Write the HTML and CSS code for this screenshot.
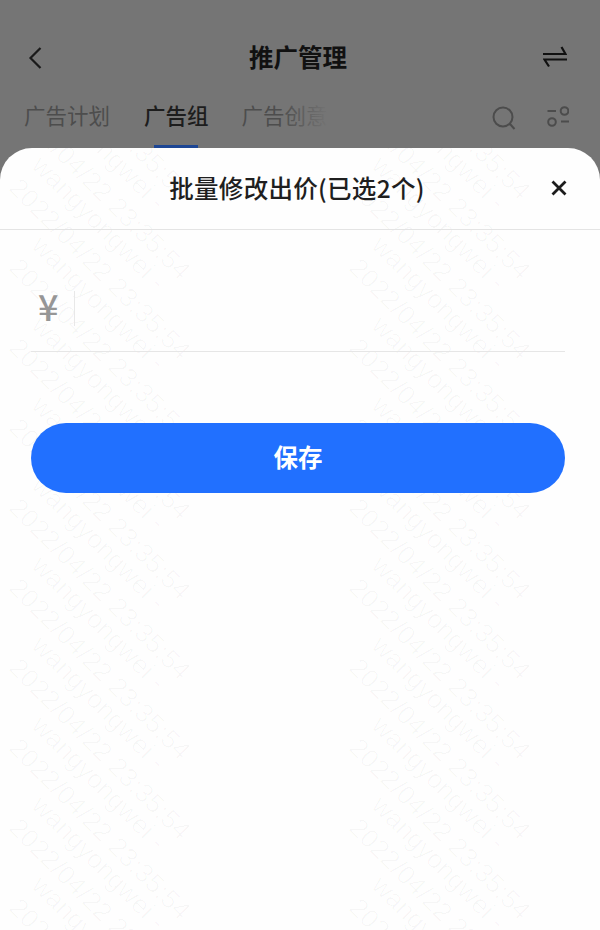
FILE: index.html
```html
<!DOCTYPE html>
<html lang="zh-CN">
<head>
<meta charset="utf-8">
<title>推广管理</title>
<link rel="stylesheet" href="styles.css">
</head>
<body>
<div class="page">
  <header class="nav">
    <svg class="nav-back" width="24" height="30" viewBox="0 0 24 30"><path d="M16.500 5 L6.500 15 L16.500 25" fill="none" stroke="#1a1a1a" stroke-width="2.200"/></svg>
    <h1 class="nav-title">推广管理</h1>
    <svg class="nav-swap" width="24" height="22" viewBox="0 0 24 22"><path d="M0 8H22.500L18.500 1M24 13.500H1.500L6 20.500" fill="none" stroke="#111" stroke-width="2.200"/></svg>
  </header>
  <div class="tabs">
    <span class="tab">广告计划</span>
    <span class="tab tab-active">广告组</span>
    <span class="tab tab-fade">广告创意</span>
    <div class="tab-tools">
      <svg width="24" height="24" viewBox="0 0 24 24"><circle cx="11" cy="11" r="9.500" fill="none" stroke="#4c4c4c" stroke-width="2"/><path d="M18 18L22.500 23" stroke="#4c4c4c" stroke-width="2" fill="none"/></svg>
      <svg width="22" height="22" viewBox="0 0 22 22"><path d="M0.500 5H9M14 15.500H22" stroke="#4c4c4c" stroke-width="2"/><circle cx="17.500" cy="5" r="3.800" fill="none" stroke="#4c4c4c" stroke-width="2"/><circle cx="5" cy="16" r="3.800" fill="none" stroke="#4c4c4c" stroke-width="2"/></svg>
    </div>
  </div>

  <section class="sheet">
    <div class="sheet-head">
      <h2 class="sheet-title">批量修改出价(已选2个)</h2>
      <svg class="sheet-close" width="18" height="18" viewBox="0 0 18 18"><path d="M2.500 2.500L15.500 15.500M15.500 2.500L2.500 15.500" stroke="#1c1c1c" stroke-width="2.800" fill="none"/></svg>
    </div>
    <div class="sheet-body">
      <div class="price-field">
        <span class="price-unit">¥</span>
        <span class="price-caret"></span>
      </div>
      <button class="save-btn" type="button">保存</button>
    </div>
    <div class="watermarks" aria-hidden="true">
      <div class="wm"><span>wangyongwei -</span><span>2022/04/22 23:35:54</span></div>
      <div class="wm"><span>wangyongwei -</span><span>2022/04/22 23:35:54</span></div>
      <div class="wm"><span>wangyongwei -</span><span>2022/04/22 23:35:54</span></div>
      <div class="wm"><span>wangyongwei -</span><span>2022/04/22 23:35:54</span></div>
      <div class="wm"><span>wangyongwei -</span><span>2022/04/22 23:35:54</span></div>
      <div class="wm"><span>wangyongwei -</span><span>2022/04/22 23:35:54</span></div>
      <div class="wm"><span>wangyongwei -</span><span>2022/04/22 23:35:54</span></div>
      <div class="wm"><span>wangyongwei -</span><span>2022/04/22 23:35:54</span></div>
      <div class="wm"><span>wangyongwei -</span><span>2022/04/22 23:35:54</span></div>
      <div class="wm"><span>wangyongwei -</span><span>2022/04/22 23:35:54</span></div>
      <div class="wm"><span>wangyongwei -</span><span>2022/04/22 23:35:54</span></div>
      <div class="wm"><span>wangyongwei -</span><span>2022/04/22 23:35:54</span></div>
      <div class="wm"><span>wangyongwei -</span><span>2022/04/22 23:35:54</span></div>
      <div class="wm"><span>wangyongwei -</span><span>2022/04/22 23:35:54</span></div>
      <div class="wm"><span>wangyongwei -</span><span>2022/04/22 23:35:54</span></div>
      <div class="wm"><span>wangyongwei -</span><span>2022/04/22 23:35:54</span></div>
      <div class="wm"><span>wangyongwei -</span><span>2022/04/22 23:35:54</span></div>
      <div class="wm"><span>wangyongwei -</span><span>2022/04/22 23:35:54</span></div>
      <div class="wm"><span>wangyongwei -</span><span>2022/04/22 23:35:54</span></div>
      <div class="wm"><span>wangyongwei -</span><span>2022/04/22 23:35:54</span></div>
      <div class="wm"><span>wangyongwei -</span><span>2022/04/22 23:35:54</span></div>
      <div class="wm"><span>wangyongwei -</span><span>2022/04/22 23:35:54</span></div>
      <div class="wm"><span>wangyongwei -</span><span>2022/04/22 23:35:54</span></div>
      <div class="wm"><span>wangyongwei -</span><span>2022/04/22 23:35:54</span></div>
      <div class="wm"><span>wangyongwei -</span><span>2022/04/22 23:35:54</span></div>
      <div class="wm"><span>wangyongwei -</span><span>2022/04/22 23:35:54</span></div>
      <div class="wm"><span>wangyongwei -</span><span>2022/04/22 23:35:54</span></div>
      <div class="wm"><span>wangyongwei -</span><span>2022/04/22 23:35:54</span></div>
    </div>
  </section>
</div>
</body>
</html>
```
FILE: styles.css
```css
* { box-sizing: border-box; margin: 0; padding: 0; }
html, body { height: 100%; }
body {
  background: #757575;
  font-family: "Noto Sans CJK SC", "Noto Sans", sans-serif;
  overflow: hidden;
}
.page {
  position: relative;
  width: 600px;
  height: 930px;
  overflow: hidden;
}
.nav {
  height: 92px;
  padding: 24px 33px 0 24px;
  display: flex;
  align-items: center;
  justify-content: space-between;
}
.nav-back { flex: none; }
.nav-title {
  font-size: 24.500px;
  font-weight: 700;
  color: #111;
  line-height: 36px;
  position: absolute;
  left: 249px;
  top: 39px;
}
.nav-swap { flex: none; margin-top: -3px; }
.tabs {
  height: 56px;
  padding: 0 31px 0 24px;
  display: flex;
  align-items: flex-start;
  gap: 34px;
}
.tab {
  font-size: 21.500px;
  line-height: 32px;
  color: #4d4d4d;
  height: 56px;
  padding: 7px 0 0;
}
.tab-active {
  color: #1d1d1d;
  font-weight: 500;
  position: relative;
}
.tab-active::after {
  content: "";
  position: absolute;
  left: 10px;
  right: 11px;
  bottom: 0;
  height: 3px;
  background: #1d4694;
}
.tab-fade {
  position: relative;
  margin-left: -1px;
}
.tab-fade::after {
  content: "";
  position: absolute;
  left: 38px;
  top: 0;
  width: 50px;
  height: 56px;
  background: linear-gradient(to right, rgba(117,117,117,0), #757575);
}
.tab-tools {
  margin-left: auto;
  display: flex;
  gap: 31px;
  padding-top: 14px;
}
.sheet {
  position: absolute;
  left: 0;
  top: 148px;
  width: 600px;
  height: 782px;
  background: #fefefe;
  border-radius: 32px 32px 0 0;
  overflow: hidden;
}
.sheet-head {
  height: 82px;
  border-bottom: 1.500px solid #e4e4e4;
  display: flex;
  align-items: center;
  justify-content: center;
  position: relative;
  z-index: 1;
  padding: 0 6px 0 0;
}
.sheet-title {
  font-size: 24.500px;
  font-weight: 500;
  letter-spacing: 0.300px;
  color: #1f1f1f;
  line-height: 36px;
  margin-top: -1px;
}
.sheet-close {
  position: absolute;
  right: 32px;
  top: 31px;
}
.sheet-body {
  position: relative;
  z-index: 1;
  padding: 0 35px 0 31px;
}
.price-field {
  height: 122px;
  border-bottom: 1.500px solid #e6e6e6;
  display: flex;
  align-items: center;
  padding: 36px 0 0 7px;
}
.price-unit {
  font-size: 36px;
  font-weight: 500;
  line-height: 40px;
  color: #969696;
  width: 36px;
  margin-top: -8px;
}
.price-caret {
  width: 1px;
  height: 35px;
  background: #e8e8e8;
}
.save-btn {
  display: block;
  width: 100%;
  height: 70px;
  margin-top: 71px;
  padding-bottom: 2px;
  border: 0;
  border-radius: 35px;
  background: #2170ff;
  color: #fff;
  font: 700 24.500px/34px "Noto Sans CJK SC", "Noto Sans", sans-serif;
}
.watermarks {
  position: absolute;
  left: 48px;
  top: -159px;
  display: grid;
  grid-template-columns: repeat(2, 340px);
  grid-auto-rows: 80px;
  pointer-events: none;
}
.wm {
  width: 340px;
  height: 80px;
  transform: rotate(45deg);
  transform-origin: 0 0;
  display: flex;
  flex-direction: column;
  font-family: "Liberation Sans", sans-serif;
  font-size: 26.500px;
  line-height: 32px;
  color: rgba(0, 0, 0, 0.026);
  white-space: nowrap;
}
```
